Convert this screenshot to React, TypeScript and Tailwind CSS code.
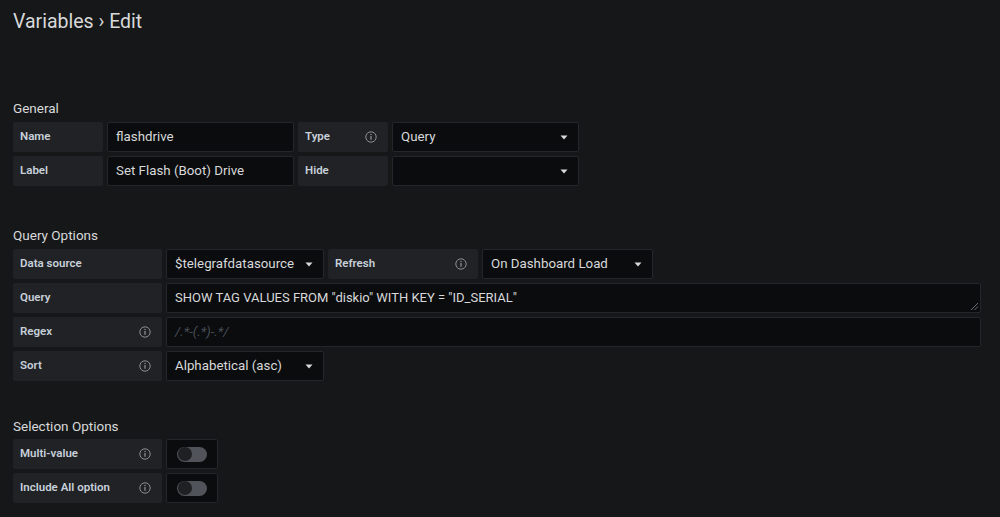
import React from "react"

const InfoIcon = () => (
  <svg width="12" height="12" viewBox="0 0 12 12" className="shrink-0">
    <circle cx="6" cy="6" r="5.2" fill="none" stroke="#8a8e94" strokeWidth="1" />
    <circle cx="6" cy="3.6" r="0.75" fill="#8a8e94" />
    <rect x="5.35" y="5" width="1.3" height="3.8" rx="0.4" fill="#8a8e94" />
  </svg>
)

const Caret = () => (
  <svg width="8" height="5" viewBox="0 0 8 5" className="shrink-0">
    <path d="M0.5 0.5 H7.5 L4 4.5 Z" fill="#d8d9da" />
  </svg>
)

type LabelProps = { text: string; width: string; info?: boolean }

const Label = ({ text, width, info }: LabelProps) => (
  <div
    className={`${width} h-[30px] shrink-0 rounded-[2px] bg-[#202226] flex items-center justify-between pl-[7px] pr-[11px] text-[11.5px] font-semibold text-[#c7d0d9]`}
  >
    <span>{text}</span>
    {info && <InfoIcon />}
  </div>
)

const Field = ({
  width,
  value,
  select,
}: {
  width: string
  value?: string
  select?: boolean
}) => (
  <div
    className={`${width} h-[30px] shrink-0 rounded-[2px] border border-[#24262a] bg-[#0b0c0e] flex items-center justify-between pl-[8px] pr-[10px] text-[13.3px] text-[#d8d9da]`}
  >
    <span className="whitespace-nowrap">{value}</span>
    {select && <Caret />}
  </div>
)

const Toggle = () => (
  <div className="w-[52px] h-[30px] shrink-0 rounded-[2px] border border-[#24262a] bg-[#0b0c0e] flex items-center justify-center">
    <div className="w-[30px] h-[15px] rounded-full bg-[#50545a] flex items-center pl-[1px]">
      <div className="w-[14px] h-[14px] rounded-full bg-[#1f2023]" />
    </div>
  </div>
)

const Heading = ({ children, className }: { children: React.ReactNode; className: string }) => (
  <div className={`text-[13.5px] text-[#d8d9da] leading-[16px] ${className}`}>{children}</div>
)

export default function App() {
  return (
    <div
      className="w-[1000px] h-[517px] overflow-hidden bg-[#161719] px-[13px] text-[#d8d9da]"
      style={{ fontFamily: "Roboto, 'Liberation Sans', sans-serif" }}
    >
      <h1 className="pt-[10px] text-[19.5px] leading-[24px] text-[#d8d9da]">Variables › Edit</h1>

      {/* General */}
      <Heading className="mt-[66px]">General</Heading>
      <div className="mt-[6px] flex flex-col gap-[4px]">
        <div className="flex gap-[4px]">
          <Label text="Name" width="w-[90px]" />
          <Field width="w-[187px]" value="flashdrive" />
          <Label text="Type" width="w-[90px]" info />
          <Field width="w-[187px]" value="Query" select />
        </div>
        <div className="flex gap-[4px]">
          <Label text="Label" width="w-[90px]" />
          <Field width="w-[187px]" value="Set Flash (Boot) Drive" />
          <Label text="Hide" width="w-[90px]" />
          <Field width="w-[187px]" select />
        </div>
      </div>

      {/* Query Options */}
      <Heading className="mt-[41px]">Query Options</Heading>
      <div className="mt-[6px] flex flex-col gap-[4px]">
        <div className="flex gap-[4px]">
          <Label text="Data source" width="w-[149px]" />
          <Field width="w-[158px]" value="$telegrafdatasource" select />
          <Label text="Refresh" width="w-[150px]" info />
          <Field width="w-[171px]" value="On Dashboard Load" select />
        </div>
        <div className="flex gap-[4px]">
          <Label text="Query" width="w-[149px]" />
          <div className="relative w-[815px] h-[30px] shrink-0 rounded-[2px] border border-[#24262a] bg-[#0b0c0e] flex items-center pl-[8px] text-[13px] text-[#d8d9da]">
            <span className="whitespace-nowrap">SHOW TAG VALUES FROM "diskio" WITH KEY = "ID_SERIAL"</span>
            <svg width="9" height="9" viewBox="0 0 9 9" className="absolute right-[1px] bottom-[1px]">
              <path d="M1 8 L8 1 M4.5 8 L8 4.5" stroke="#6b6e73" strokeWidth="1" />
            </svg>
          </div>
        </div>
        <div className="flex gap-[4px]">
          <Label text="Regex" width="w-[149px]" info />
          <div className="w-[815px] h-[30px] shrink-0 rounded-[2px] border border-[#24262a] bg-[#0b0c0e] flex items-center pl-[8px] text-[13.3px] italic text-[#464c54]">
            /.*-(.*)-.*/
          </div>
        </div>
        <div className="flex gap-[4px]">
          <Label text="Sort" width="w-[149px]" info />
          <Field width="w-[158px]" value="Alphabetical (asc)" select />
        </div>
      </div>

      {/* Selection Options */}
      <Heading className="mt-[37px]">Selection Options</Heading>
      <div className="mt-[5px] flex flex-col gap-[4px]">
        <div className="flex gap-[4px]">
          <Label text="Multi-value" width="w-[149px]" info />
          <Toggle />
        </div>
        <div className="flex gap-[4px]">
          <Label text="Include All option" width="w-[149px]" info />
          <Toggle />
        </div>
      </div>
    </div>
  )
}
